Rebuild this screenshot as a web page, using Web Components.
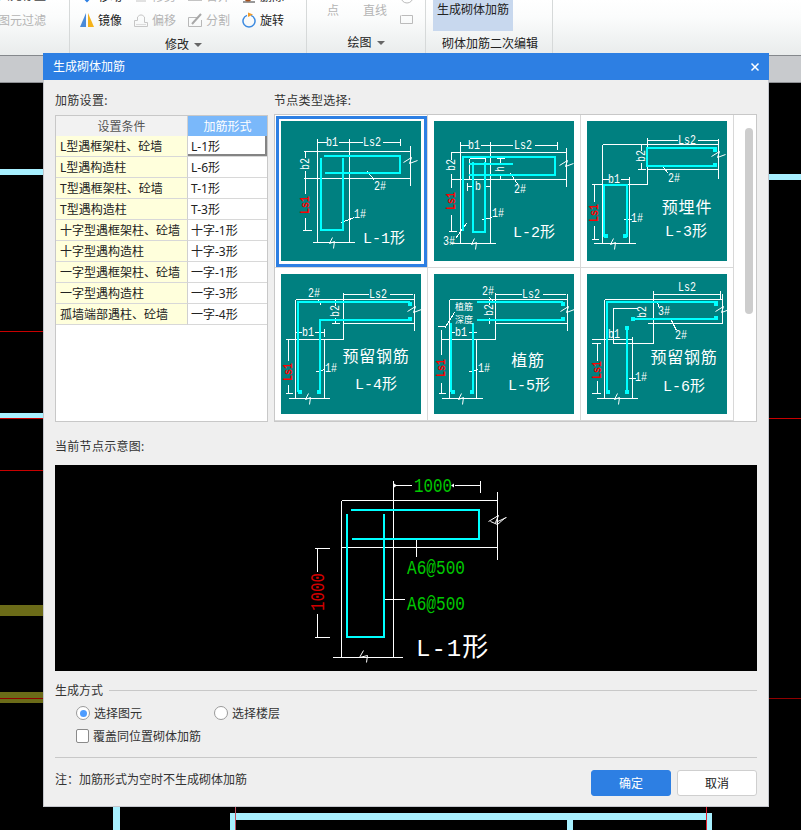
<!DOCTYPE html>
<html lang="zh">
<head>
<meta charset="utf-8">
<title>生成砌体加筋</title>
<style>
html,body{margin:0;padding:0;background:#000;}
body{font:12px/17px "Noto Sans","Noto Sans CJK SC",sans-serif;color:#333;}
</style>
</head>
<body>
<app-shell>
    <top-ribbon></top-ribbon>
    <tab-strip></tab-strip>
    <cad-canvas></cad-canvas>
    <rebar-dialog>
        <span slot="title">生成砌体加筋</span>
        <rebar-row selected><span slot="cond">L型遇框架柱、砼墙</span><span slot="form">L-1形</span></rebar-row>
        <rebar-row><span slot="cond">L型遇构造柱</span><span slot="form">L-6形</span></rebar-row>
        <rebar-row><span slot="cond">T型遇框架柱、砼墙</span><span slot="form">T-1形</span></rebar-row>
        <rebar-row><span slot="cond">T型遇构造柱</span><span slot="form">T-3形</span></rebar-row>
        <rebar-row><span slot="cond">十字型遇框架柱、砼墙</span><span slot="form">十字-1形</span></rebar-row>
        <rebar-row><span slot="cond">十字型遇构造柱</span><span slot="form">十字-3形</span></rebar-row>
        <rebar-row><span slot="cond">一字型遇框架柱、砼墙</span><span slot="form">一字-1形</span></rebar-row>
        <rebar-row><span slot="cond">一字型遇构造柱</span><span slot="form">一字-3形</span></rebar-row>
        <rebar-row><span slot="cond">孤墙端部遇柱、砼墙</span><span slot="form">一字-4形</span></rebar-row>
    </rebar-dialog>
</app-shell>

<script>
const MONO = `"Liberation Mono","Noto Sans CJK SC",monospace`
const CJK = `"Noto Sans CJK SC",sans-serif`

class AppShell extends HTMLElement{
    constructor() {
        super()
        this._shadowRoot = this.attachShadow({mode:'open'})
        this._shadowRoot.innerHTML = `<style>
        :host{display:flex;flex-direction:column;position:relative;width:801px;height:830px;overflow:hidden;background:#000;}
        </style><slot></slot>`
    }
}

class RibbonItem extends HTMLElement{
    constructor() {
        super()
        this._shadowRoot = this.attachShadow({mode:'open'})
        this._shadowRoot.innerHTML = `<style>
        :host{display:flex;align-items:center;gap:3px;width:54px;height:22px;color:#222;white-space:nowrap;}
        :host([off]){color:#b4b4b4;}
        ::slotted(svg){flex:none;}
        </style><slot></slot>`
    }
}

class TopRibbon extends HTMLElement{
    constructor() {
        super()
        this._shadowRoot = this.attachShadow({mode:'open'})
        this._shadowRoot.innerHTML = `<style>
        :host{display:flex;flex:none;height:56px;box-sizing:border-box;border-bottom:1px solid #85888c;overflow:hidden;
            background:linear-gradient(#ffffff,#fbfcfc 30%,#e9ecec);color:#222;}
        .grp{flex:none;box-sizing:border-box;height:55px;border-right:1px solid #d6d9d9;display:flex;flex-direction:column;}
        .g1{width:70px;}
        .g1 .a{margin:-13px 0 0 -2px;height:20px;color:#444;}
        .g1 .b{margin:4px 0 0 -2px;height:20px;line-height:20px;color:#b4b4b4;}
        .g2{width:237px;padding-left:9px;}
        .row{display:flex;height:21px;margin-top:-15px;}
        .row + .row{height:22px;margin-top:3px;}
        .foot{flex:1;display:flex;align-items:center;justify-content:center;gap:5px;padding-top:3px;}
        .g2 .foot{padding-right:9px;margin-left:-9px;}
        .tri{width:0;height:0;border:solid transparent;border-width:4px 4px 0;border-top-color:#666;}
        .g3{width:119px;}
        .g3 .top{height:30px;display:flex;padding-left:20px;color:#b4b4b4;}
        .g3 .top span{width:36px;padding-top:2px;}
        .g3 .foot{padding-top:0;}
        .g4{width:127px;padding-left:7px;}
        .hl{width:80px;height:31px;background:#c8d8ee;display:flex;justify-content:center;padding-top:1px;box-sizing:border-box;}
        .g4 .foot{padding:0 0 0 3px;justify-content:flex-start;margin-left:6px;}
        </style>
        <div class="grp g1">
            <div class="a">图元存盘</div>
            <div class="b">图元过滤</div>
        </div>
        <div class="grp g2">
            <div class="row">
                <ribbon-item><svg width="16" height="16"><path d="M8 2V12M4 9l4 4 4-4" stroke="#2d7fe3" stroke-width="2" fill="none"/></svg>移动</ribbon-item>
                <ribbon-item off><svg width="16" height="16"><path d="M3 13H13" stroke="#c4c4c4" fill="none"/></svg>修剪</ribbon-item>
                <ribbon-item off><svg width="16" height="16"><rect x="1" y="8" width="14" height="5" fill="#c4c4c4"/></svg>合并</ribbon-item>
                <ribbon-item><svg width="16" height="16"><path d="M2 14H14" stroke="#333" fill="none"/><circle cx="7" cy="10" r="3.5" fill="#a5501c"/></svg>删除</ribbon-item>
            </div>
            <div class="row">
                <ribbon-item><svg width="16" height="16"><path d="M7 1V15H1Z" fill="#4a8ad8"/><path d="M9 1V15H15Z" fill="#f5b21a"/></svg>镜像</ribbon-item>
                <ribbon-item off><svg width="16" height="16"><path d="M1.500 14.500H14.500V10.500H11.500V5Q8 .8 4.500 5V8.500H1.500Z" fill="none" stroke="#c6c6c6"/><path d="M3 12.500H13" stroke="#dcdcdc"/></svg>偏移</ribbon-item>
                <ribbon-item off><svg width="16" height="16"><path d="M1.500 5.500H12M1.500 5.500V14.500H14.500V8" fill="none" stroke="#b8b8b8"/><path d="M5 12L14 2" stroke="#a8a8a8" stroke-width="2"/></svg>分割</ribbon-item>
                <ribbon-item><svg width="16" height="16"><path d="M6 3.400A6 6 0 1 0 10 3.400" fill="none" stroke="#3c8ae0" stroke-width="1.500"/><path d="M7 .5L12 2.500L7 5Z" fill="#ef9a2a"/></svg>旋转</ribbon-item>
            </div>
            <div class="foot"><span>修改</span><i class="tri"></i></div>
        </div>
        <div class="grp g3">
            <div class="top"><span>点</span><span>直线</span>
                <svg width="18" height="30" style="margin-left:-1px"><circle cx="9" cy="-3" r="6" fill="none" stroke="#bbb"/><path d="M3.500 15.500H14.500V23.500H2.500V15.500" fill="none" stroke="#bbb"/></svg>
            </div>
            <div class="foot"><span>绘图</span><i class="tri"></i></div>
        </div>
        <div class="grp g4">
            <div class="hl">生成砌体加筋</div>
            <div class="foot"><span>砌体加筋二次编辑</span></div>
        </div>`
    }
}

class TabStrip extends HTMLElement{
    constructor() {
        super()
        this._shadowRoot = this.attachShadow({mode:'open'})
        this._shadowRoot.innerHTML = `<style>
        :host{display:block;flex:none;box-sizing:border-box;height:27px;background:#c8cacd;border-bottom:1px solid #8e9094;}
        </style>`
    }
}

class CadCanvas extends HTMLElement{
    constructor() {
        super()
        this._shadowRoot = this.attachShadow({mode:'open'})
        const cyan = '#a8f0ff', red = '#c80000', olive = '#6b6b18'
        // x, y (page), w, h, colour: drawing on the CAD canvas behind the dialog
        const shapes = [
            [0,169,43,6,cyan],[769,174,32,6,cyan],
            [0,331,43,1,red],[0,413,43,5,cyan],[0,418,801,1,red],[0,470,43,1,red],
            [0,605,43,11,olive],[0,692,43,11,olive],[0,698,801,1,'#900000'],
            [113,807,7,23,cyan],[230,813,482,7,cyan],[230,813,6,17,cyan],[706,813,6,17,cyan],[567,820,6,10,cyan],
            [235,807,1,23,'#c05060'],[706,807,1,23,'#e02030']
        ]
        const html = shapes.map(s => `<i style="left:${s[0]}px;top:${s[1]-83}px;width:${s[2]}px;height:${s[3]}px;background:${s[4]}"></i>`).join('')
        this._shadowRoot.innerHTML = `<style>
        :host{display:block;flex:1;position:relative;background:#000;}
        i{position:absolute;display:block;}
        </style>${html}`
    }
}

class RebarRow extends HTMLElement{
    constructor() {
        super()
        this._shadowRoot = this.attachShadow({mode:'open'})
        this._shadowRoot.innerHTML = `<style>
        :host{display:grid;grid-template-columns:132px 79px;height:21px;box-sizing:border-box;}
        div{box-sizing:border-box;height:21px;padding-top:1px;line-height:20px;border-bottom:1px solid #d8d8d8;white-space:nowrap;color:#222;overflow:hidden;}
        .c{background:#ffffdc;padding-left:4px;border-right:1px solid #d0d0d0;}
        .f{background:#fff;padding-left:3px;}
        :host([selected]) .f{box-shadow:inset -2px -2px 0 #848484;}
        </style><div class="c"><slot name="cond"></slot></div><div class="f"><slot name="form"></slot></div>`
    }
}

class NodeThumb extends HTMLElement{
    static get drawings() {
        return {
            L1:{
                w:'M36 17V121M68 17V121M119 17V24M36 21H45M57 21H81M101 21H119M22 30H129M22 57H129M129 24V64M31 121H73M24 30V36M24 49V72M24 96V109M21 109H30M86 50L93 59M60 101L73 96',
                c:'M43 35H119V52H44M40 37V109H62V37', sq:[],
                br:[129,39], bb:[51,121],
                t:[[51,21,'b1'],[91,21,'Ls2'],[99,65,'2#'],[79,93,'1#']], v:[[24,43,'b2']], r:[24,84],
                big:[[103,116,'L-1形']]
            },
            L2:{
                w:'M26 20V122M56 20V122M123 20V28M26 24H34M46 24H78M100 24H123M16 31H131M16 58H131M132 26V65M16 122H61M17 31V38M17 52V66M17 93V110M14 110H22M35 37H51V58M35 37V58M66 37V42M66 54V58M62 37H70M62 58H70M33 65H39M49 65H56M33 61V69M32 102L21 117M48 98L58 96M76 52L84 64',
                c:'M29 110V36H121V54H35M39 41V111H51V41M35 43H79', sq:[],
                br:[132,42], bb:[40,122],
                t:[[40,24,'b1'],[89,24,'Ls2'],[44,65,'b'],[15,120,'3#'],[64,92,'1#'],[86,68,'2#']], v:[[17,44,'b2'],[66,48,'h']], r:[17,80],
                big:[[100,110,'L-2形']]
            },
            L3:{
                w:'M15 23V122M15 23H131M60 23V63M6 63H60M131 17V57M60 48H131M42 63V122M6 122H48M60 19H90M110 19H131M60 16V23M54 23V29M54 41V48M50 48H58M15 58H21M33 58H42M42 55V62M7 63V80M7 104V118M4 118H11M4 63H11M75 45L81 52M36 98H44',
                c:'M130 27H60V45H130M17 116V64H40V116', sq:[[126,27],[126,42],[17,113],[36,113]],
                br:[131,33], bb:[26,122],
                t:[[100,19,'Ls2'],[27,58,'b1'],[87,57,'2#'],[50,97,'1#']], v:[[54,35,'b2']], r:[7,92],
                big:[[99,109,'L-3形']], cn:[[100,86,'预埋件']]
            },
            L4:{
                w:'M14 25V124M14 25H133M62 18V65M133 19V56M62 49H133M7 65H62M43 65V124M7 124H48M62 20H87M108 20H131M54 25V31M54 43V49M50 49H58M14 58H20M33 58H43M43 54V62M7 65V86M7 110V119M4 119H11M4 65H11M36 25L40 31M35 97L44 95',
                c:'M17 118V28H129M39 118V46H129', sq:[[17,116],[36,116],[127,28],[127,43]],
                br:[133,35], bb:[27,124],
                t:[[97,20,'Ls2'],[33,19,'2#'],[27,58,'b1'],[50,94,'1#']], v:[[54,37,'b2']], r:[7,98],
                big:[[95,109,'L-4形']], cn:[[95,82,'预留钢筋']]
            },
            L5:{
                w:'M15 25V124M15 25H133M61 18V65M133 19V56M61 49H133M6 65H61M42 65V124M7 124H48M61 20H87M108 20H131M55 25V30M55 43V49M15 58H20M34 58H42M7 55V80M7 108V119M4 119H11M3 52H11M20 38L10 54M55 23L60 28M35 97L44 95',
                c:'M17 49V118M39 49V118M43 28H129M43 46H129', sq:[[17,116],[36,116],[127,28],[127,43]],
                br:[133,35], bb:[27,124],
                t:[[97,20,'Ls2'],[54,17,'2#'],[27,58,'b1'],[50,94,'1#']], v:[[55,36,'b2']], r:[7,94],
                big:[[95,110,'L-5形']], cn:[[94,86,'植筋']], small:[[30,31.5,'植筋'],[30,44.5,'深度']]
            },
            L6:{
                w:'M17 25V124M17 25H135M66 16V69M135 19V49M60 49H135M4 65H45M45 62V124M9 124H50M66 20H133M133 16V24M50 34H26V69H66M10 69V86M10 106V119M4 69H13M4 119H13M70 28L72 34M84 46L89 56M41 104H48',
                c:'M20 118V28H131M45 45H131M40 53V118', sq:[[19,116],[38,116],[127,28],[127,42],[44,43],[38,52]],
                br:[135,35], bb:[30,124],
                t:[[100,13,'Ls2'],[27,60,'b1'],[77,37,'3#'],[94,61,'2#'],[54,103,'1#']], v:[[55,38,'b2']], r:[10,96],
                big:[[97,111,'L-6形']], cn:[[97,83,'预留钢筋']]
            }
        }
    }
    constructor() {
        super()
        this._shadowRoot = this.attachShadow({mode:'open'})
        const d = NodeThumb.drawings[this.getAttribute('name')]
        const fit = s => `textLength="${s.length*6}" lengthAdjust="spacingAndGlyphs"`
        const txt = (x,y,s) => `<text x="${x}" y="${y+4}" text-anchor="middle" font-size="13" ${fit(s)} fill="#fff" font-family='${MONO}'>${s}</text>`
        const vert = (x,y,s,fill,b) => `<text x="${x}" y="${y+4}" transform="rotate(-90 ${x} ${y})" text-anchor="middle" font-size="13" ${fit(s)} ${b?'font-weight="bold"':''} fill="${fill}" font-family='${MONO}'>${s}</text>`
        const parts = [
            ...d.t.map(a => txt(a[0],a[1],a[2])),
            ...d.v.map(a => vert(a[0],a[1],a[2],'#fff')),
            vert(d.r[0],d.r[1],'Ls1','#f00',true),
            ...d.big.map(a => `<text x="${a[0]}" y="${a[1]+6}" text-anchor="middle" font-size="15" fill="#fff" font-family='${MONO}'>${a[2]}</text>`),
            ...(d.cn||[]).map(a => `<text x="${a[0]}" y="${a[1]+6}" text-anchor="middle" font-size="16" letter-spacing=".8" fill="#fff" font-family='${CJK}'>${a[2]}</text>`),
            ...(d.small||[]).map(a => `<text x="${a[0]}" y="${a[1]+4}" text-anchor="middle" font-size="9" fill="#fff" font-family='${CJK}'>${a[2]}</text>`)
        ].join('')
        const brk = d.br, bb = d.bb
        this._shadowRoot.innerHTML = `<style>
        :host{display:block;box-sizing:border-box;width:153px;height:153px;padding:6px;border-right:1px solid #d8d8d8;border-bottom:1px solid #d8d8d8;position:relative;background:#fff;}
        :host([selected])::after{content:"";position:absolute;left:1px;top:1px;width:145px;height:145px;border:3px solid #2d7fe3;}
        svg{display:block;}
        </style>
        <svg width="140" height="140" viewBox="0 0 140 140">
            <rect width="140" height="140" fill="#008080"/>
            <g transform="translate(.5 .5)" fill="none">
                <path d="${d.w}" stroke="#fff" shape-rendering="crispEdges"/>
                <path d="M${brk[0]-7} ${brk[1]+2}L${brk[0]+1} ${brk[1]-3}L${brk[0]-1} ${brk[1]+3}L${brk[0]+7} ${brk[1]}" stroke="#fff"/>
                <path d="M${bb[0]} ${bb[1]-5}L${bb[0]-3} ${bb[1]+1}L${bb[0]+2} ${bb[1]-1}L${bb[0]+1} ${bb[1]+6}" stroke="#fff"/>
            </g>
            <path d="${d.c}" fill="none" stroke="#0ff" stroke-width="2"/>
            ${d.sq.map(q => `<rect x="${q[0]}" y="${q[1]}" width="4" height="4" fill="#0ff"/>`).join('')}
            ${parts}
        </svg>`
    }
}

class NodePicker extends HTMLElement{
    constructor() {
        super()
        this._shadowRoot = this.attachShadow({mode:'open'})
        this._shadowRoot.innerHTML = `<style>
        :host{display:flex;box-sizing:border-box;width:483px;height:308px;margin-top:-1px;border:1px solid #c8c8c8;background:#fff;overflow:hidden;}
        .grid{display:grid;grid-template-columns:repeat(3,153px);grid-auto-rows:153px;width:459px;}
        .bar{flex:1;padding:13px 0 0 11px;box-sizing:border-box;}
        .bar i{display:block;width:8px;height:186px;border-radius:4px;background:#cdcdcd;}
        </style>
        <div class="grid">
            <node-thumb name="L1" selected></node-thumb>
            <node-thumb name="L2"></node-thumb>
            <node-thumb name="L3"></node-thumb>
            <node-thumb name="L4"></node-thumb>
            <node-thumb name="L5"></node-thumb>
            <node-thumb name="L6"></node-thumb>
        </div>
        <div class="bar"><i></i></div>`
    }
}

class NodePreview extends HTMLElement{
    constructor() {
        super()
        this._shadowRoot = this.attachShadow({mode:'open'})
        const green = '#00c800'
        const label = (x,y,s) => `<text x="${x}" y="${y}" font-size="21" fill="${green}" textLength="58" lengthAdjust="spacingAndGlyphs" font-family='${MONO}'>${s}</text>`
        this._shadowRoot.innerHTML = `<style>
        :host{display:block;width:702px;height:206px;background:#000;}
        svg{display:block;}
        </style>
        <svg width="702" height="206" viewBox="0 0 702 206">
            <g transform="translate(.5 .5)" fill="none">
                <path stroke="#fff" shape-rendering="crispEdges" d="M338 15V192M425 15V27M338 20H356M399 20H425M286 35H442M286 35V192M286 82H442M442 26V94M277 192H347M262 83V106M262 148V172M259 83H274M259 172H274M361 74V91M329 134H349"/>
                <path stroke="#fff" d="M433 56L443 50L440 57L451 52M435 56L442 59L450 52"/>
                <path stroke="#fff" d="M308 185L304 192L312 190L311 197"/>
            </g>
            <path fill="none" stroke="#0ff" stroke-width="2" d="M296 45H424V74H297M292 49V172H329V49"/>
            <path d="M342 20.500l-3-2v4zM396 20.500l3-2v4z" fill="#fff"/>
            <text x="378" y="27" text-anchor="middle" font-size="20" fill="${green}" textLength="38" lengthAdjust="spacingAndGlyphs" font-family='${MONO}'>1000</text>
            <text x="262" y="127" transform="rotate(-90 262 127)" dy="7" text-anchor="middle" font-size="20" fill="#d00000" textLength="38" lengthAdjust="spacingAndGlyphs" font-family='${MONO}'>1000</text>
            ${label(352,109,'A6@500')}
            ${label(352,145,'A6@500')}
            <text x="361" y="191" fill="#fff" font-size="24" letter-spacing="1" font-family='${MONO}'>L-1<tspan font-size="26">形</tspan></text>
        </svg>`
    }
}

class RadioOpt extends HTMLElement{
    constructor() {
        super()
        this._shadowRoot = this.attachShadow({mode:'open'})
        this._shadowRoot.innerHTML = `<style>
        :host{display:flex;align-items:center;gap:4px;height:14px;}
        i{box-sizing:border-box;width:14px;height:14px;border:1px solid #9a9a9a;border-radius:50%;background:#fff;display:flex;align-items:center;justify-content:center;}
        :host([checked]) i::after{content:"";width:7px;height:7px;border-radius:50%;background:#4d9cff;}
        </style><i></i><slot></slot>`
    }
}

class CheckOpt extends HTMLElement{
    constructor() {
        super()
        this._shadowRoot = this.attachShadow({mode:'open'})
        this._shadowRoot.innerHTML = `<style>
        :host{display:flex;align-items:center;gap:4px;height:14px;}
        i{box-sizing:border-box;width:13px;height:14px;border:1px solid #8a8a8a;border-radius:2px;background:#fff;}
        </style><i></i><slot></slot>`
    }
}

class DialogBtn extends HTMLElement{
    constructor() {
        super()
        this._shadowRoot = this.attachShadow({mode:'open'})
        this._shadowRoot.innerHTML = `<style>
        :host{display:flex;align-items:center;justify-content:center;box-sizing:border-box;width:80px;height:26px;border-radius:3px;background:#fff;border:1px solid #cfcfcf;color:#222;}
        :host([primary]){background:#2d7fe3;border-color:#2d7fe3;color:#fff;}
        </style><slot></slot>`
    }
}

class RebarDialog extends HTMLElement{
    constructor() {
        super()
        this._shadowRoot = this.attachShadow({mode:'open'})
        this._shadowRoot.innerHTML = `<style>
        :host{display:block;position:absolute;left:43px;top:53px;width:726px;height:754px;}
        .title{height:27px;background:#2d7fe3;color:#fff;display:flex;align-items:center;justify-content:space-between;padding:0 9px 0 10px;line-height:27px;}
        .body{box-sizing:border-box;height:727px;background:#efefef;padding:12px 11px 0 11px;border:solid #c4c6cc;border-width:0 1px 1px 1px;}
        .top{display:grid;grid-template-columns:213px 483px;column-gap:6px;grid-template-rows:17px auto;row-gap:6px;}
        .table{box-sizing:border-box;height:307px;border:1px solid #c8c8c8;background:#fff;}
        .head{display:grid;grid-template-columns:132px 79px;height:20px;line-height:21px;text-align:center;}
        .head div:first-child{background:#f2f2f2;color:#555;border-bottom:1px solid #d0d0d0;border-right:1px solid #d0d0d0;box-sizing:border-box;}
        .head div:last-child{background:#7ab8fa;color:#fff;}
        .lab{letter-spacing:.3px;}
        .sub{margin:16px 0 10px;height:17px;letter-spacing:.3px;}
        .group{display:flex;align-items:center;gap:6px;margin-top:11px;height:17px;}
        .group::after{content:"";flex:1;height:1px;background:#c8c8c8;}
        .opts{display:flex;margin:7px 0 0 21px;}
        .opts radio-opt{width:138px;}
        .chk{margin:9px 0 0 21px;}
        .rule{height:1px;background:#c8c8c8;margin-top:14px;}
        .foot{display:flex;align-items:flex-start;margin-top:12px;gap:6px;}
        .note{flex:1;margin-top:1px;}
        </style>
        <div class="title"><slot name="title"></slot>
            <svg width="10" height="10" viewBox="0 0 10 10"><path d="M1.500 1.500L8.500 8.500M8.500 1.500L1.500 8.500" stroke="#fff" stroke-width="1.500"/></svg>
        </div>
        <div class="body">
            <div class="top">
                <div class="lab">加筋设置:</div>
                <div class="lab">节点类型选择:</div>
                <div class="table">
                    <div class="head"><div>设置条件</div><div>加筋形式</div></div>
                    <slot></slot>
                </div>
                <node-picker></node-picker>
            </div>
            <div class="sub">当前节点示意图:</div>
            <node-preview></node-preview>
            <div class="group">生成方式</div>
            <div class="opts"><radio-opt checked>选择图元</radio-opt><radio-opt>选择楼层</radio-opt></div>
            <check-opt class="chk">覆盖同位置砌体加筋</check-opt>
            <div class="rule"></div>
            <div class="foot">
                <div class="note">注&#xFF1A;加筋形式为空时不生成砌体加筋</div>
                <dialog-btn primary>确定</dialog-btn>
                <dialog-btn>取消</dialog-btn>
            </div>
        </div>`
    }
}

// children first so the shadow markup of the outer ones upgrades straight away
window.customElements.define('ribbon-item', RibbonItem)
window.customElements.define('rebar-row', RebarRow)
window.customElements.define('node-thumb', NodeThumb)
window.customElements.define('node-picker', NodePicker)
window.customElements.define('node-preview', NodePreview)
window.customElements.define('radio-opt', RadioOpt)
window.customElements.define('check-opt', CheckOpt)
window.customElements.define('dialog-btn', DialogBtn)
window.customElements.define('top-ribbon', TopRibbon)
window.customElements.define('tab-strip', TabStrip)
window.customElements.define('cad-canvas', CadCanvas)
window.customElements.define('rebar-dialog', RebarDialog)
window.customElements.define('app-shell', AppShell)
</script>
</body>
</html>
